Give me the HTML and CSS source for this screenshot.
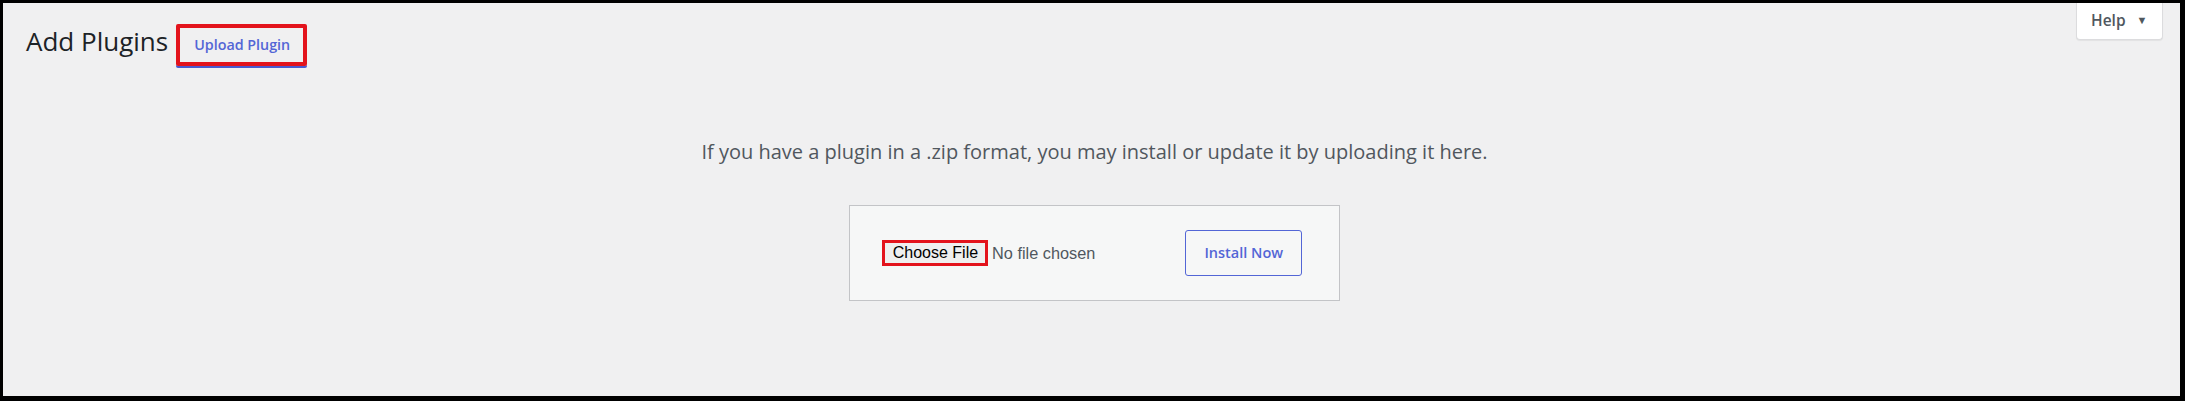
FILE: index.html
```html
<!DOCTYPE html>
<html lang="en">
<head>
<meta charset="utf-8">
<title>Add Plugins</title>
<link rel="stylesheet" href="styles.css">
</head>
<body>
<div class="frame">
  <div class="top">
    <div class="heading">
      <h1 class="title">Add Plugins</h1>
      <a class="upload-btn" href="#">Upload Plugin</a>
    </div>
    <div class="help-tab">Help <span class="caret">▼</span></div>
  </div>
  <div class="upload">
    <p class="install-help">If you have a plugin in a .zip format, you may install or update it by uploading it here.</p>
    <form class="upload-form">
      <span class="choose">Choose File</span>
      <span class="nofile">No file chosen</span>
      <span class="install">Install Now</span>
    </form>
  </div>
</div>
</body>
</html>
```

FILE: styles.css
```css
html, body {
  margin: 0;
  padding: 0;
  background: #000;
}
.frame {
  box-sizing: border-box;
  width: 2185px;
  height: 401px;
  border-style: solid;
  border-color: #000;
  border-width: 3px 5px 5px 3px;
  background: #f0f0f1;
  padding: 0 17px 0 23px;
  font-family: "Open Sans", "Noto Sans", sans-serif;
}
.top {
  display: flex;
  justify-content: space-between;
  align-items: flex-start;
  height: 66px;
}
.heading {
  display: flex;
  align-items: flex-start;
  padding-top: 17px;
}
.title {
  margin: 0 8px 0 0;
  font-size: 26px;
  font-weight: 400;
  line-height: 42px;
  color: #1d2327;
}
.upload-btn {
  box-sizing: border-box;
  margin-top: 4px;
  height: 42px;
  border: 4px solid #e3131c;
  border-radius: 2px;
  padding: 0 13px 0 14px;
  line-height: 34px;
  font-size: 14.3px;
  font-weight: 600;
  color: #5366d6;
  text-decoration: none;
  box-shadow: 0 2px 0 #4a5ad0;
}
.help-tab {
  box-sizing: border-box;
  width: 87px;
  height: 37px;
  background: #fff;
  border: 1px solid #dcdcde;
  border-top: none;
  border-radius: 0 0 4px 4px;
  box-shadow: 0 1px 1px rgba(0,0,0,0.06);
  padding-left: 14px;
  line-height: 33px;
  font-size: 15.5px;
  font-weight: 600;
  color: #50575e;
}
.caret {
  font-size: 11px;
  margin-left: 7px;
  vertical-align: 2px;
}
.upload {
  text-align: center;
}
.install-help {
  margin: 69px 0 39px;
  font-size: 20px;
  line-height: 28px;
  color: #50575e;
}
.upload-form {
  display: inline-flex;
  align-items: center;
  padding: 24px 37px 24px 32px;
  border: 1px solid #c3c4c7;
  background: #f6f7f7;
}
.choose {
  box-sizing: border-box;
  height: 26px;
  border: 3px solid #e3131c;
  background: #efefef;
  padding: 0 7px 0 8px;
  line-height: 20px;
  font-family: "Liberation Sans", Arial, sans-serif;
  font-size: 16px;
  color: #000;
}
.nofile {
  margin-left: 4px;
  font-family: "Liberation Sans", Arial, sans-serif;
  font-size: 16.3px;
  color: #50575e;
}
.install {
  box-sizing: border-box;
  margin-left: 90px;
  width: 117px;
  height: 46px;
  border: 1.5px solid #5366d6;
  border-radius: 3px;
  background: #f6f7f7;
  line-height: 43px;
  font-size: 14.5px;
  font-weight: 600;
  color: #5366d6;
  text-align: center;
}
```
